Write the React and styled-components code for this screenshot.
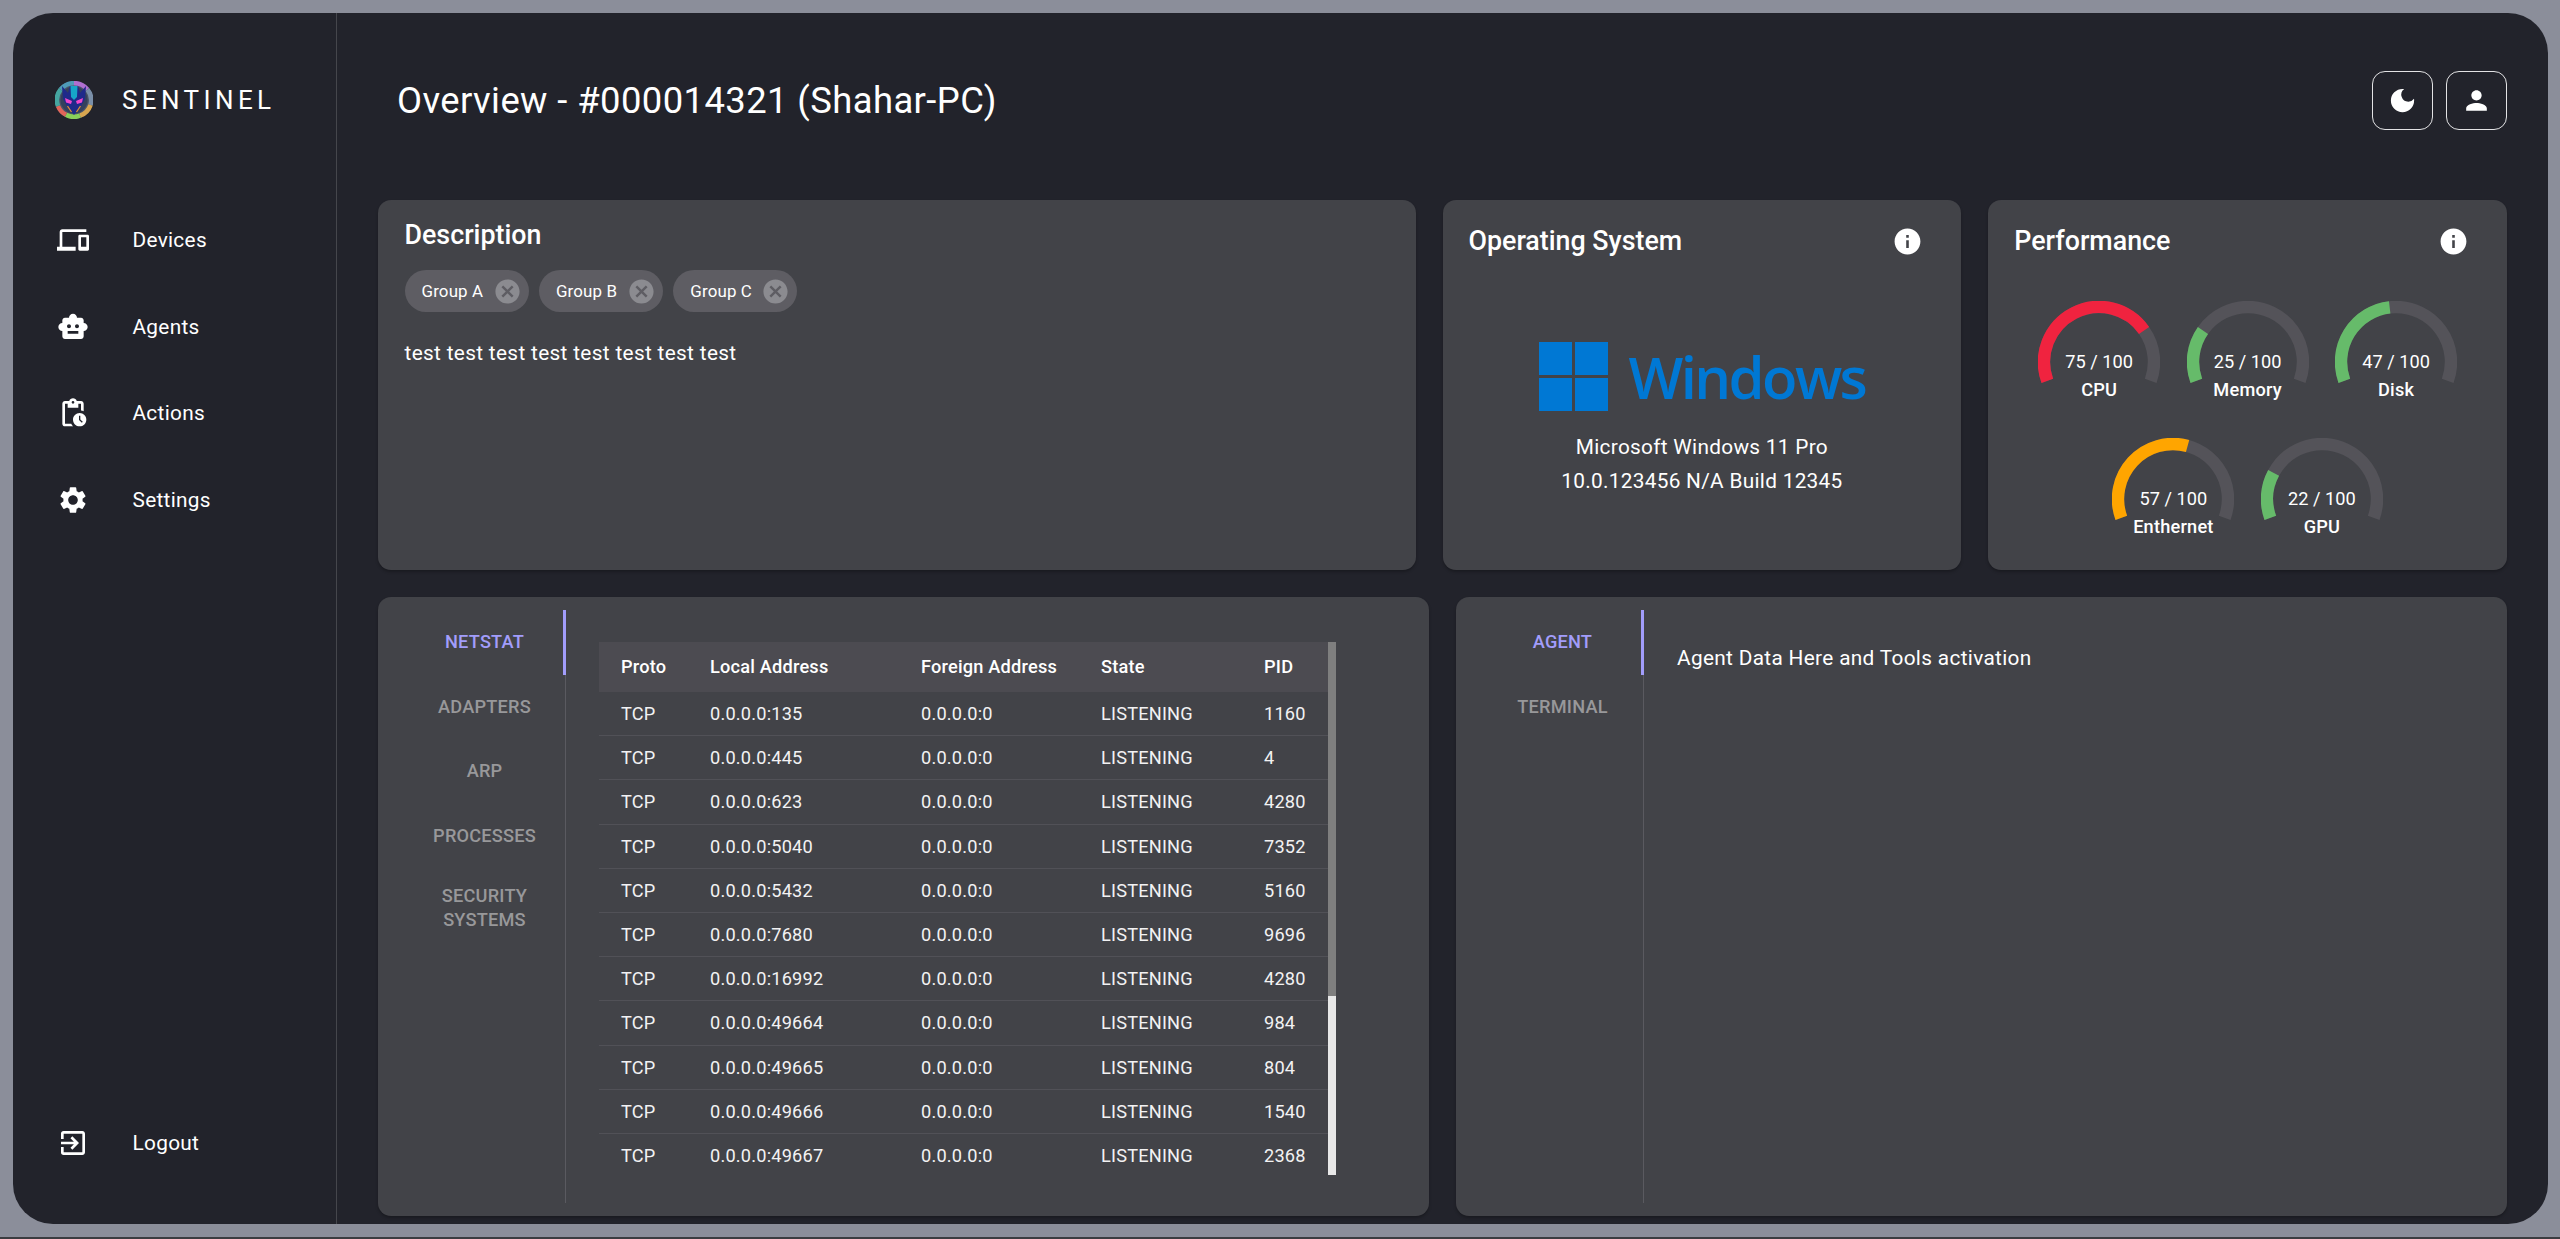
import React from "react";
import styled, { createGlobalStyle } from "styled-components";
import {
  MdDevices,
  MdSmartToy,
  MdOutlinePendingActions,
  MdSettings,
  MdOutlineExitToApp,
  MdDarkMode,
  MdPerson,
  MdInfo,
  MdCancel,
} from "react-icons/md";

const GlobalStyle = createGlobalStyle`
  html, body {
    margin: 0;
    padding: 0;
    height: 1239px;
    overflow: hidden;
    background: #3b3c40;
    font-family: Roboto, "Liberation Sans", sans-serif;
    color: #fff;
  }
  * { box-sizing: border-box; }
`;

const Page = styled.div`
  height: 1237px;
  padding: 13px 12px 13px 13px;
  background: #8b8e9a;
`;
const Frame = styled.div`
  display: flex;
  height: 1211px;
  border-radius: 40px;
  overflow: hidden;
  background: #22232b;
`;
const Sidebar = styled.aside`
  display: flex;
  flex-direction: column;
  flex: 0 0 324px;
  padding-bottom: 38px;
  border-right: 1px solid #45464c;
`;
const Brand = styled.div`
  display: flex;
  align-items: center;
  gap: 29px;
  height: 174px;
  padding-left: 42px;
  margin-bottom: 10px;
`;
const BrandName = styled.span`
  font-size: 26px;
  letter-spacing: 4.4px;
`;
const NavList = styled.nav`
  display: flex;
  flex-direction: column;
  flex: 1;
`;
const NavItem = styled.a`
  display: flex;
  align-items: center;
  height: 86.5px;
  padding-left: 44px;
  font-size: 20.8px;
  letter-spacing: 0.3px;
  color: #fff;
  svg {
    flex: 0 0 32px;
    margin-right: 43.5px;
  }
`;
const LogoutItem = styled(NavItem)`
  margin-top: auto;
`;
const Main = styled.main`
  display: flex;
  flex-direction: column;
  flex: 1;
  min-width: 0;
  padding: 0 41px 8px;
`;
const Header = styled.header`
  display: flex;
  align-items: center;
  justify-content: space-between;
  height: 174px;
  margin-bottom: 13px;
  padding-left: 19px;
`;
const Title = styled.h1`
  margin: 0;
  font-size: 36.4px;
  font-weight: 400;
  letter-spacing: 0.42px;
`;
const HeaderActions = styled.div`
  display: flex;
  gap: 13px;
`;
const SquareButton = styled.button`
  display: flex;
  align-items: center;
  justify-content: center;
  width: 61px;
  height: 59px;
  padding: 0;
  background: transparent;
  border: 1.3px solid #e3e3e5;
  border-radius: 13px;
  color: #fff;
`;
const TopRow = styled.section`
  display: grid;
  grid-template-columns: 2fr 1fr 1fr;
  grid-template-rows: minmax(0, 1fr);
  gap: 27px;
  height: 370px;
  margin-bottom: 27px;
`;
const BottomRow = styled.section`
  display: grid;
  grid-template-columns: 1fr 1fr;
  gap: 27px;
  flex: 1;
  min-height: 0;
`;
const Card = styled.div`
  position: relative;
  border-radius: 13px;
  background: #424348;
  box-shadow: 0 2px 3px rgba(0, 0, 0, 0.25);
`;
const DescriptionCard = styled(Card)`
  padding: 19px 26.5px;
`;
const CardHeading = styled.h2`
  margin: 0;
  font-size: 26.8px;
  line-height: 32px;
  font-weight: 500;
`;
const CardHead = styled.div`
  display: flex;
  align-items: center;
  justify-content: space-between;
  height: 32px;
  margin: 25px 38px 0 26px;
`;
const ChipRow = styled.div`
  display: flex;
  gap: 10.4px;
  margin-top: 19px;
`;
const Chip = styled.span`
  display: inline-flex;
  align-items: center;
  justify-content: space-between;
  width: 124px;
  height: 42px;
  padding: 0 7px 0 17px;
  border-radius: 21px;
  background: #5e5d63;
  font-size: 16.9px;
  letter-spacing: 0.15px;
  svg {
    color: #8b8b90;
  }
`;
const BodyText = styled.p`
  margin: 25px 0 0;
  font-size: 20.8px;
  line-height: 33px;
  letter-spacing: 0.33px;
`;
const PanelText = styled(BodyText)`
  margin-top: 13px;
`;
const OsBody = styled.div`
  display: flex;
  flex-direction: column;
  align-items: center;
  margin-top: 85px;
`;
const WindowsLogo = styled.div`
  display: flex;
  align-items: center;
  gap: 21px;
  height: 69px;
  margin-bottom: 19px;
`;
const WindowsMark = styled.div`
  display: grid;
  grid-template-columns: 1fr 1fr;
  gap: 3px;
  width: 69px;
  height: 69px;
`;
const WindowsPane = styled.span`
  background: #0078d4;
`;
const WindowsWord = styled.span`
  font-family: "Open Sans", sans-serif;
  font-size: 58px;
  font-weight: 600;
  line-height: 69px;
  letter-spacing: -2.6px;
  color: #0078d4;
`;
const OsLine = styled.div`
  font-size: 20.8px;
  line-height: 34px;
  letter-spacing: 0.3px;
`;
const GaugeGrid = styled.div`
  display: flex;
  flex-wrap: wrap;
  justify-content: center;
  width: 446px;
  margin: 44px auto 0;
`;
const GaugeItem = styled.div`
  display: flex;
  flex-direction: column;
  align-items: center;
  width: 148.5px;
  height: 137px;
`;
const GaugeDial = styled.div`
  position: relative;
  width: 122px;
  height: 83px;
`;
const GaugeValue = styled.span`
  position: absolute;
  left: 0;
  right: 0;
  top: 50px;
  text-align: center;
  font-size: 18.2px;
  line-height: 22px;
`;
const GaugeLabel = styled.span`
  margin-top: -5px;
  font-size: 18.2px;
  line-height: 22px;
  font-weight: 500;
  letter-spacing: 0.2px;
`;
const TabbedCard = styled(Card)`
  display: flex;
  padding: 13px 26px;
  min-height: 0;
`;
const TabList = styled.div`
  flex: 0 0 162px;
  border-right: 1px solid #5a5a60;
`;
const Tab = styled.div`
  position: relative;
  display: flex;
  align-items: center;
  justify-content: center;
  min-height: 64.6px;
  padding: ${(p) => (p.$tall ? "15px 10px 0" : "0 10px")};
  text-align: center;
  font-size: 18.2px;
  line-height: 24px;
  font-weight: 500;
  letter-spacing: 0.2px;
  text-transform: uppercase;
  color: ${(p) => (p.$active ? "#a29dfb" : "#98989a")};
  &::after {
    content: "";
    display: ${(p) => (p.$active ? "block" : "none")};
    position: absolute;
    top: 0;
    right: -1px;
    bottom: 0;
    width: 3px;
    background: #a29dfb;
  }
`;
const TabPanel = styled.div`
  flex: 1;
  min-width: 0;
  padding: 19px 0 0 33px;
`;
const NetstatWrap = styled.div`
  display: flex;
  width: 737px;
  height: 533px;
  margin-top: 13px;
`;
const Table = styled.div`
  flex: 1;
  overflow: hidden;
  font-size: 18.2px;
  letter-spacing: 0.2px;
`;
const Row = styled.div`
  display: grid;
  grid-template-columns: 89px 211px 180px 163px 1fr;
  align-items: center;
  height: 44.2px;
  padding-left: 22px;
  border-bottom: 1px solid #515157;
  color: #f2f2f3;
`;
const HeadRow = styled(Row)`
  height: 50px;
  padding-bottom: 2px;
  background: #4c4b51;
  border-bottom: none;
  font-weight: 500;
  color: #fff;
`;
const Cell = styled.span`
  white-space: nowrap;
`;
const ScrollTrack = styled.div`
  flex: 0 0 8px;
  background: #e8e8e8;
`;
const ScrollThumb = styled.div`
  height: 354px;
  background: #7f7f7f;
`;

const navItems = [
  { label: "Devices", icon: MdDevices },
  { label: "Agents", icon: MdSmartToy },
  { label: "Actions", icon: MdOutlinePendingActions },
  { label: "Settings", icon: MdSettings },
];

const gauges = [
  { label: "CPU", value: 75, color: "#f0233f" },
  { label: "Memory", value: 25, color: "#66bb6a" },
  { label: "Disk", value: 47, color: "#66bb6a" },
  { label: "Enthernet", value: 57, color: "#ffa500" },
  { label: "GPU", value: 22, color: "#66bb6a" },
];

const netstat = [
  ["0.0.0.0:135", "1160"],
  ["0.0.0.0:445", "4"],
  ["0.0.0.0:623", "4280"],
  ["0.0.0.0:5040", "7352"],
  ["0.0.0.0:5432", "5160"],
  ["0.0.0.0:7680", "9696"],
  ["0.0.0.0:16992", "4280"],
  ["0.0.0.0:49664", "984"],
  ["0.0.0.0:49665", "804"],
  ["0.0.0.0:49666", "1540"],
  ["0.0.0.0:49667", "2368"],
];

const polar = (angle, r) => {
  const rad = (angle * Math.PI) / 180;
  return [61 + r * Math.sin(rad), 61 - r * Math.cos(rad)];
};

const arcPath = (from, to) => {
  const [x1, y1] = polar(from, 55);
  const [x2, y2] = polar(to, 55);
  const large = to - from > 180 ? 1 : 0;
  return `M${x1} ${y1}A55 55 0 ${large} 1 ${x2} ${y2}`;
};

const Gauge = ({ label, value, color }) => (
  <GaugeItem>
    <GaugeDial>
      <svg width="122" height="83" viewBox="0 0 122 83" fill="none" strokeWidth="12.4">
        <path d={arcPath(-110, 110)} stroke="#545359" />
        <path d={arcPath(-110, -110 + (220 * value) / 100)} stroke={color} />
      </svg>
      <GaugeValue>{value} / 100</GaugeValue>
    </GaugeDial>
    <GaugeLabel>{label}</GaugeLabel>
  </GaugeItem>
);

const BrandLogo = () => (
  <svg width="38" height="38" viewBox="0 0 38 38">
    <circle cx="19" cy="19" r="19" fill="#4a5568" />
    <g fill="none" strokeWidth="4.6">
      <path d="M5.6 8.5A17 17 0 0 1 19 2.2" stroke="#4f9bb8" />
      <path d="M19 2.2A17 17 0 0 1 32.4 8.5" stroke="#b06fd0" />
      <path d="M32.4 8.5A17 17 0 0 1 35.5 24" stroke="#7a8fa8" />
      <path d="M35.5 24A17 17 0 0 1 25 34.7" stroke="#d8a650" />
      <path d="M25 34.7A17 17 0 0 1 11 33.8" stroke="#8ad05a" />
      <path d="M11 33.8A17 17 0 0 1 3 25" stroke="#e0665a" />
      <path d="M3 25A17 17 0 0 1 5.6 8.5" stroke="#45a5a0" />
    </g>
    <circle cx="19" cy="19" r="13.5" fill="#34405c" />
    <path d="M7 5l6 7 2-7h8l2 7 6-7-1 13-4 7-7 9-7-9-4-7z" fill="#1f2a8a" />
    <path d="M15.5 5h7l-.5 11-3 3-3-3z" fill="#16a6c8" />
    <path d="M10 17l7 3-1 3-5-1.5zM28 17l-7 3 1 3 5-1.5z" fill="#f045cc" />
    <path d="M12.5 25l4 6M25.5 25l-4 6" stroke="#e08a3a" strokeWidth="1.3" fill="none" />
  </svg>
);

const App = () => (
  <>
    <GlobalStyle />
    <Page>
      <Frame>
        <Sidebar>
          <Brand>
            <BrandLogo />
            <BrandName>SENTINEL</BrandName>
          </Brand>
          <NavList>
            {navItems.map(({ label, icon: Icon }) => (
              <NavItem key={label}>
                <Icon size={32} />
                {label}
              </NavItem>
            ))}
            <LogoutItem>
              <MdOutlineExitToApp size={32} />
              Logout
            </LogoutItem>
          </NavList>
        </Sidebar>
        <Main>
          <Header>
            <Title>Overview - #000014321 (Shahar-PC)</Title>
            <HeaderActions>
              <SquareButton>
                <MdDarkMode size={31} />
              </SquareButton>
              <SquareButton>
                <MdPerson size={31} />
              </SquareButton>
            </HeaderActions>
          </Header>
          <TopRow>
            <DescriptionCard>
              <CardHeading>Description</CardHeading>
              <ChipRow>
                {["Group A", "Group B", "Group C"].map((name) => (
                  <Chip key={name}>
                    {name}
                    <MdCancel size={29} />
                  </Chip>
                ))}
              </ChipRow>
              <BodyText>test test test test test test test test</BodyText>
            </DescriptionCard>
            <Card>
              <CardHead>
                <CardHeading>Operating System</CardHeading>
                <MdInfo size={31} />
              </CardHead>
              <OsBody>
                <WindowsLogo>
                  <WindowsMark>
                    <WindowsPane />
                    <WindowsPane />
                    <WindowsPane />
                    <WindowsPane />
                  </WindowsMark>
                  <WindowsWord>Windows</WindowsWord>
                </WindowsLogo>
                <OsLine>Microsoft Windows 11 Pro</OsLine>
                <OsLine>10.0.123456 N/A Build 12345</OsLine>
              </OsBody>
            </Card>
            <Card>
              <CardHead>
                <CardHeading>Performance</CardHeading>
                <MdInfo size={31} />
              </CardHead>
              <GaugeGrid>
                {gauges.map((g) => (
                  <Gauge key={g.label} {...g} />
                ))}
              </GaugeGrid>
            </Card>
          </TopRow>
          <BottomRow>
            <TabbedCard>
              <TabList>
                <Tab $active>Netstat</Tab>
                <Tab>Adapters</Tab>
                <Tab>ARP</Tab>
                <Tab>Processes</Tab>
                <Tab $tall>Security Systems</Tab>
              </TabList>
              <TabPanel>
                <NetstatWrap>
                  <Table>
                    <HeadRow>
                      <Cell>Proto</Cell>
                      <Cell>Local Address</Cell>
                      <Cell>Foreign Address</Cell>
                      <Cell>State</Cell>
                      <Cell>PID</Cell>
                    </HeadRow>
                    {netstat.map(([local, pid]) => (
                      <Row key={local}>
                        <Cell>TCP</Cell>
                        <Cell>{local}</Cell>
                        <Cell>0.0.0.0:0</Cell>
                        <Cell>LISTENING</Cell>
                        <Cell>{pid}</Cell>
                      </Row>
                    ))}
                  </Table>
                  <ScrollTrack>
                    <ScrollThumb />
                  </ScrollTrack>
                </NetstatWrap>
              </TabPanel>
            </TabbedCard>
            <TabbedCard>
              <TabList>
                <Tab $active>Agent</Tab>
                <Tab>Terminal</Tab>
              </TabList>
              <TabPanel>
                <PanelText as="div">Agent Data Here and Tools activation</PanelText>
              </TabPanel>
            </TabbedCard>
          </BottomRow>
        </Main>
      </Frame>
    </Page>
  </>
);

export default App;
